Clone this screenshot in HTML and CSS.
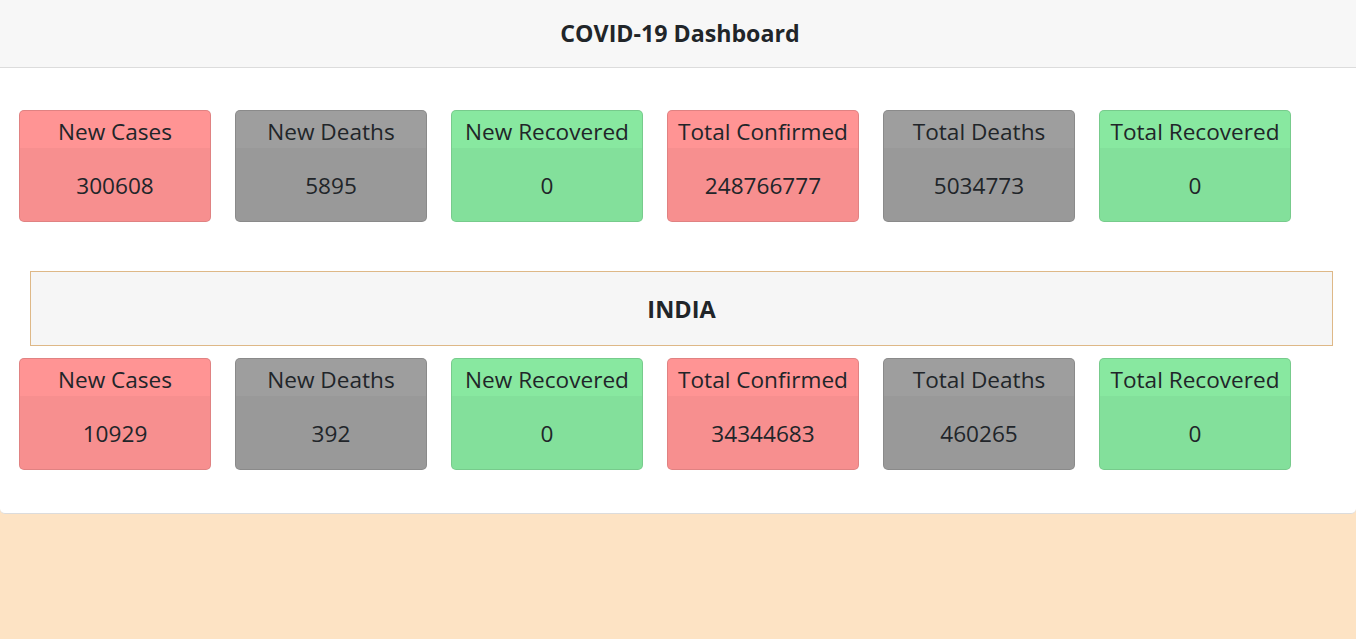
FILE: index.html
```html
<!DOCTYPE html>
<html>
<head>
<meta charset="utf-8">
<title>COVID-19 Dashboard</title>
<link rel="stylesheet" href="styles.css">
</head>
<body>
<div class="card">
  <div class="card-header">COVID-19 Dashboard</div>
  <div class="card-body">
    <div class="stats">
      <div class="stat red"><div class="stat-head">New Cases</div><div class="stat-val">300608</div></div>
      <div class="stat gray"><div class="stat-head">New Deaths</div><div class="stat-val">5895</div></div>
      <div class="stat green"><div class="stat-head">New Recovered</div><div class="stat-val">0</div></div>
      <div class="stat red"><div class="stat-head">Total Confirmed</div><div class="stat-val">248766777</div></div>
      <div class="stat gray"><div class="stat-head">Total Deaths</div><div class="stat-val">5034773</div></div>
      <div class="stat green"><div class="stat-head">Total Recovered</div><div class="stat-val">0</div></div>
    </div>
    <div class="country">INDIA</div>
    <div class="stats">
      <div class="stat red"><div class="stat-head">New Cases</div><div class="stat-val">10929</div></div>
      <div class="stat gray"><div class="stat-head">New Deaths</div><div class="stat-val">392</div></div>
      <div class="stat green"><div class="stat-head">New Recovered</div><div class="stat-val">0</div></div>
      <div class="stat red"><div class="stat-head">Total Confirmed</div><div class="stat-val">34344683</div></div>
      <div class="stat gray"><div class="stat-head">Total Deaths</div><div class="stat-val">460265</div></div>
      <div class="stat green"><div class="stat-head">Total Recovered</div><div class="stat-val">0</div></div>
    </div>
  </div>
</div>
</body>
</html>
```
FILE: styles.css
```css
html, body {
  margin: 0;
  padding: 0;
  background: #fde3c4;
  font-family: "Open Sans", "Noto Sans", sans-serif;
  color: #212529;
}
.card {
  background: #fff;
  border-bottom: 1px solid #dcdcdc;
  border-radius: 0 0 5px 5px;
}
.card-header {
  height: 66px;
  padding-left: 4px;
  display: flex;
  align-items: center;
  justify-content: center;
  background: #f7f7f7;
  border-bottom: 1px solid #dcdcdc;
  font-weight: 700;
  font-size: 23.2px;
  padding-bottom: 1px;
}
.card-body {
  padding: 42px 23px 43px 19px;
}
.stats {
  display: flex;
  gap: 24px;
}
.stat {
  width: 192px;
  height: 112px;
  box-sizing: border-box;
  border: 1px solid rgba(0, 0, 0, 0.12);
  border-radius: 5px;
  display: flex;
  flex-direction: column;
  overflow: hidden;
  font-size: 22.6px;
  text-align: center;
}
.stat-head {
  height: 37px;
  line-height: 42px;
}
.stat-val {
  flex: 1;
  display: flex;
  align-items: center;
  justify-content: center;
  padding-top: 2px;
  background: rgba(0, 0, 0, 0.03);
}
.red { background: #ff9494; }
.gray { background: #9e9e9e; }
.green { background: #88e8a0; }
.country {
  margin: 49px 0 12px 11px;
  height: 73px;
  border: 1px solid #deb887;
  background: #f6f6f6;
  display: flex;
  align-items: center;
  justify-content: center;
  font-weight: 700;
  font-size: 23.5px;
}
```
